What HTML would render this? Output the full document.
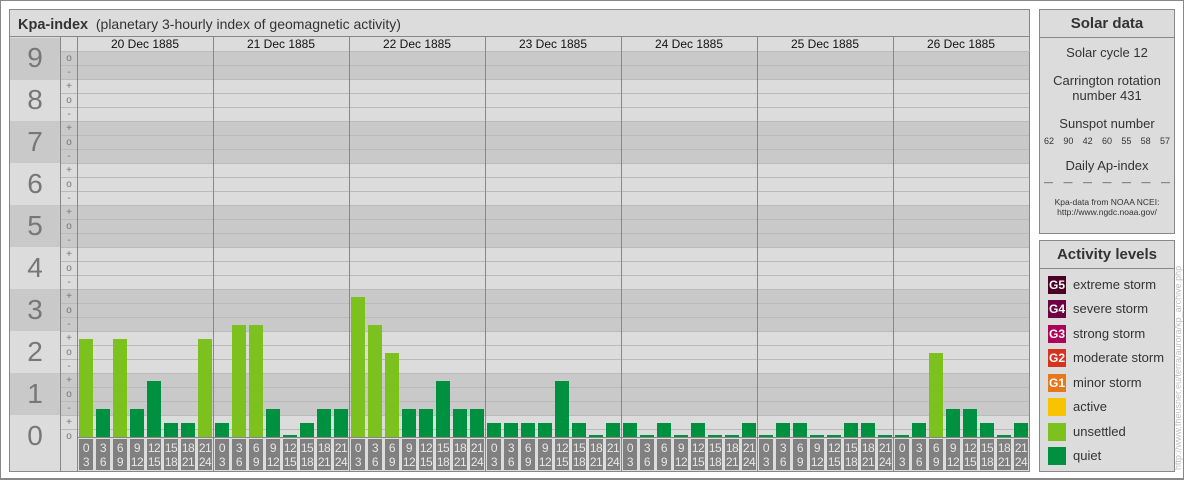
<!DOCTYPE html>
<html><head><meta charset="utf-8"><style>
*{margin:0;padding:0;box-sizing:border-box}
body{width:1184px;height:480px;background:#fff;font-family:"Liberation Sans",sans-serif;position:relative;overflow:hidden}
.a{position:absolute}
.outer{left:0;top:0;width:1184px;height:480px;border:1px solid #888;border-bottom:2px solid #888}
.main{left:9px;top:9px;width:1021px;height:463px;border:1px solid #888;background:#dcdcdc}
.title{left:10px;top:10px;width:1019px;height:27px;border-bottom:1px solid #888;font-size:14px;color:#333;padding:6px 0 0 8px}
.title b{font-size:14.5px}
.band{left:10px;width:1019px;height:42px}
.dk{background:#c9c9c9}
.num{left:10px;width:50px;font-size:28px;color:#777;text-align:center}
.hline{left:60px;width:969px;height:1px;background:#bababa}
.vl{width:1px;background:#888;top:37px;height:434px}
.tk{left:61px;width:16px;font-size:10px;color:#777;text-align:center;line-height:10px}
.hdr{top:37px;height:14px;width:136px;background:#dcdcdc;font-size:12px;text-align:center;color:#111;line-height:15px}
.row{display:flex;align-items:flex-end}
.row div{margin-left:2px;margin-right:1px;width:14px;flex:none}
.q{background:#009140}.u{background:#7dc11f}
.tl{display:flex;top:439px;height:31px;left:77px}
.tl div{margin-left:2px;margin-right:1px;width:14px;background:#808080;color:#e8e8e8;font-size:12px;line-height:14px;text-align:center;padding-top:2px;letter-spacing:-0.5px}
.box{background:#dcdcdc;border:1px solid #888;left:1039px;width:136px}
.bh{height:28px;border-bottom:1px solid #888;font-weight:bold;font-size:15px;color:#333;text-align:center;line-height:28px}
.st{font-size:13px;color:#333;text-align:center;line-height:15px}
.lg{position:absolute;left:8px;height:18px;width:18px;color:#fff;font-weight:bold;font-size:12px;line-height:18px;text-align:center}
.lt{position:absolute;left:33px;font-size:13px;color:#333;line-height:18px}
</style></head><body>
<div class="a outer"></div>
<div class="a main"></div>
<div class="a title"><b>Kpa-index</b>&nbsp;&nbsp;(planetary 3-hourly index of geomagnetic activity)</div>
<div class="a band dk" style="top:38px"></div>
<div class="a band dk" style="top:121px"></div>
<div class="a band dk" style="top:205px"></div>
<div class="a band dk" style="top:289px"></div>
<div class="a band dk" style="top:373px"></div>
<div class="a hline" style="top:51px"></div><div class="a hline" style="top:65px"></div><div class="a hline" style="top:79px"></div><div class="a hline" style="top:93px"></div><div class="a hline" style="top:107px"></div><div class="a hline" style="top:121px"></div><div class="a hline" style="top:135px"></div><div class="a hline" style="top:149px"></div><div class="a hline" style="top:163px"></div><div class="a hline" style="top:177px"></div><div class="a hline" style="top:191px"></div><div class="a hline" style="top:205px"></div><div class="a hline" style="top:219px"></div><div class="a hline" style="top:233px"></div><div class="a hline" style="top:247px"></div><div class="a hline" style="top:261px"></div><div class="a hline" style="top:275px"></div><div class="a hline" style="top:289px"></div><div class="a hline" style="top:303px"></div><div class="a hline" style="top:317px"></div><div class="a hline" style="top:331px"></div><div class="a hline" style="top:345px"></div><div class="a hline" style="top:359px"></div><div class="a hline" style="top:373px"></div><div class="a hline" style="top:387px"></div><div class="a hline" style="top:401px"></div><div class="a hline" style="top:415px"></div><div class="a hline" style="top:429px"></div>
<div class="a hdr" style="left:61px;width:16px"></div>
<div class="a hdr" style="left:77px">20 Dec 1885</div>
<div class="a hdr" style="left:213px">21 Dec 1885</div>
<div class="a hdr" style="left:349px">22 Dec 1885</div>
<div class="a hdr" style="left:485px">23 Dec 1885</div>
<div class="a hdr" style="left:621px">24 Dec 1885</div>
<div class="a hdr" style="left:757px">25 Dec 1885</div>
<div class="a hdr" style="left:893px">26 Dec 1885</div>
<div class="a hline" style="top:51px;left:61px"></div>
<div class="a num" style="top:42px">9</div>
<div class="a num" style="top:84px">8</div>
<div class="a num" style="top:126px">7</div>
<div class="a num" style="top:168px">6</div>
<div class="a num" style="top:210px">5</div>
<div class="a num" style="top:252px">4</div>
<div class="a num" style="top:294px">3</div>
<div class="a num" style="top:336px">2</div>
<div class="a num" style="top:378px">1</div>
<div class="a num" style="top:420px">0</div>
<div class="a tk" style="top:54px">o</div><div class="a tk" style="top:68px">-</div><div class="a tk" style="top:82px">+</div><div class="a tk" style="top:96px">o</div><div class="a tk" style="top:110px">-</div><div class="a tk" style="top:124px">+</div><div class="a tk" style="top:138px">o</div><div class="a tk" style="top:152px">-</div><div class="a tk" style="top:166px">+</div><div class="a tk" style="top:180px">o</div><div class="a tk" style="top:194px">-</div><div class="a tk" style="top:208px">+</div><div class="a tk" style="top:222px">o</div><div class="a tk" style="top:236px">-</div><div class="a tk" style="top:250px">+</div><div class="a tk" style="top:264px">o</div><div class="a tk" style="top:278px">-</div><div class="a tk" style="top:292px">+</div><div class="a tk" style="top:306px">o</div><div class="a tk" style="top:320px">-</div><div class="a tk" style="top:334px">+</div><div class="a tk" style="top:348px">o</div><div class="a tk" style="top:362px">-</div><div class="a tk" style="top:376px">+</div><div class="a tk" style="top:390px">o</div><div class="a tk" style="top:404px">-</div><div class="a tk" style="top:418px">+</div><div class="a tk" style="top:432px">o</div>
<div class="a vl" style="left:60px"></div><div class="a vl" style="left:77px"></div>
<div class="a vl" style="left:213px"></div><div class="a vl" style="left:349px"></div><div class="a vl" style="left:485px"></div><div class="a vl" style="left:621px"></div><div class="a vl" style="left:757px"></div><div class="a vl" style="left:893px"></div>
<div class="a" style="left:77px;top:437px;width:952px;height:1px;background:#888"></div>
<div class="a row" style="left:77px;top:290px;height:147px">
<div class="u" style="height:98px"></div><div class="q" style="height:28px"></div><div class="u" style="height:98px"></div><div class="q" style="height:28px"></div><div class="q" style="height:56px"></div><div class="q" style="height:14px"></div><div class="q" style="height:14px"></div><div class="u" style="height:98px"></div>
<div class="q" style="height:14px"></div><div class="u" style="height:112px"></div><div class="u" style="height:112px"></div><div class="q" style="height:28px"></div><div class="q" style="height:2px"></div><div class="q" style="height:14px"></div><div class="q" style="height:28px"></div><div class="q" style="height:28px"></div>
<div class="u" style="height:140px"></div><div class="u" style="height:112px"></div><div class="u" style="height:84px"></div><div class="q" style="height:28px"></div><div class="q" style="height:28px"></div><div class="q" style="height:56px"></div><div class="q" style="height:28px"></div><div class="q" style="height:28px"></div>
<div class="q" style="height:14px"></div><div class="q" style="height:14px"></div><div class="q" style="height:14px"></div><div class="q" style="height:14px"></div><div class="q" style="height:56px"></div><div class="q" style="height:14px"></div><div class="q" style="height:2px"></div><div class="q" style="height:14px"></div>
<div class="q" style="height:14px"></div><div class="q" style="height:2px"></div><div class="q" style="height:14px"></div><div class="q" style="height:2px"></div><div class="q" style="height:14px"></div><div class="q" style="height:2px"></div><div class="q" style="height:2px"></div><div class="q" style="height:14px"></div>
<div class="q" style="height:2px"></div><div class="q" style="height:14px"></div><div class="q" style="height:14px"></div><div class="q" style="height:2px"></div><div class="q" style="height:2px"></div><div class="q" style="height:14px"></div><div class="q" style="height:14px"></div><div class="q" style="height:2px"></div>
<div class="q" style="height:2px"></div><div class="q" style="height:14px"></div><div class="u" style="height:84px"></div><div class="q" style="height:28px"></div><div class="q" style="height:28px"></div><div class="q" style="height:14px"></div><div class="q" style="height:2px"></div><div class="q" style="height:14px"></div>
</div>
<div class="a tl">
<div>0<br>3</div><div>3<br>6</div><div>6<br>9</div><div>9<br>12</div><div>12<br>15</div><div>15<br>18</div><div>18<br>21</div><div>21<br>24</div>
<div>0<br>3</div><div>3<br>6</div><div>6<br>9</div><div>9<br>12</div><div>12<br>15</div><div>15<br>18</div><div>18<br>21</div><div>21<br>24</div>
<div>0<br>3</div><div>3<br>6</div><div>6<br>9</div><div>9<br>12</div><div>12<br>15</div><div>15<br>18</div><div>18<br>21</div><div>21<br>24</div>
<div>0<br>3</div><div>3<br>6</div><div>6<br>9</div><div>9<br>12</div><div>12<br>15</div><div>15<br>18</div><div>18<br>21</div><div>21<br>24</div>
<div>0<br>3</div><div>3<br>6</div><div>6<br>9</div><div>9<br>12</div><div>12<br>15</div><div>15<br>18</div><div>18<br>21</div><div>21<br>24</div>
<div>0<br>3</div><div>3<br>6</div><div>6<br>9</div><div>9<br>12</div><div>12<br>15</div><div>15<br>18</div><div>18<br>21</div><div>21<br>24</div>
<div>0<br>3</div><div>3<br>6</div><div>6<br>9</div><div>9<br>12</div><div>12<br>15</div><div>15<br>18</div><div>18<br>21</div><div>21<br>24</div>
</div>
<div class="a box" style="top:9px;height:225px">
<div class="bh">Solar data</div>
<div class="st" style="margin-top:7px">Solar cycle 12</div>
<div class="st" style="margin-top:13px">Carrington rotation<br>number 431</div>
<div class="st" style="margin-top:13px">Sunspot number</div>
<div style="display:flex;justify-content:space-between;font-size:9px;color:#333;padding:0 4px;margin-top:5px"><span>62</span><span>90</span><span>42</span><span>60</span><span>55</span><span>58</span><span>57</span></div>
<div class="st" style="margin-top:12px">Daily Ap-index</div>
<div style="display:flex;justify-content:space-between;font-size:9px;color:#333;padding:0 4px;margin-top:4px"><span>—</span><span>—</span><span>—</span><span>—</span><span>—</span><span>—</span><span>—</span></div>
<div style="font-size:8.5px;color:#333;text-align:center;margin-top:10px;line-height:10px">Kpa-data from NOAA NCEI:<br>http://www.ngdc.noaa.gov/</div>
</div>
<div class="a box" style="top:240px;height:232px">
<div class="bh">Activity levels</div>
<div class="lg" style="top:35px;background:#4b0025">G5</div><div class="lt" style="top:35px">extreme storm</div>
<div class="lg" style="top:59px;background:#6d0040">G4</div><div class="lt" style="top:59px">severe storm</div>
<div class="lg" style="top:84px;background:#ad005a">G3</div><div class="lt" style="top:84px">strong storm</div>
<div class="lg" style="top:108px;background:#d8321e">G2</div><div class="lt" style="top:108px">moderate storm</div>
<div class="lg" style="top:133px;background:#e8761a">G1</div><div class="lt" style="top:133px">minor storm</div>
<div class="lg" style="top:157px;background:#f8c400"></div><div class="lt" style="top:157px">active</div>
<div class="lg" style="top:182px;background:#7dc11f"></div><div class="lt" style="top:182px">unsettled</div>
<div class="lg" style="top:206px;background:#009140"></div><div class="lt" style="top:206px">quiet</div>
</div>
<div class="a" style="left:1173px;top:470px;width:220px;transform-origin:0 0;transform:rotate(-90deg);font-size:9px;color:#c0c0c0;white-space:nowrap;line-height:11px">http://www.theusner.eu/terra/aurora/kp_archive.php</div>
</body></html>
